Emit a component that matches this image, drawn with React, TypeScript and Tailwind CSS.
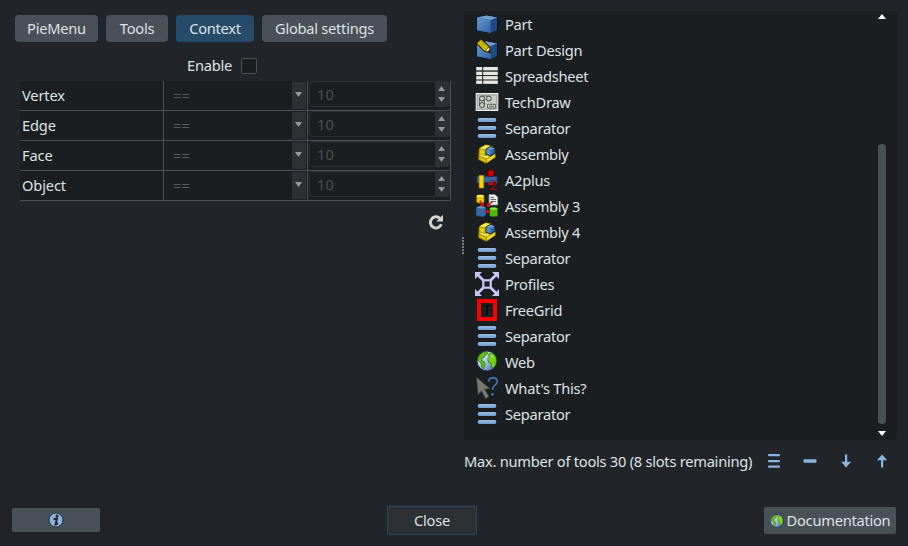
import React from "react";

const Svg = ({ children }: { children: React.ReactNode }) => (
  <svg viewBox="0 0 24 24" className="h-6 w-6 shrink-0 overflow-visible">{children}</svg>
);

const Cube = () => (
  <>
    <path d="M1.5 5.3 11.5 3l11 2v13l-7 3.4-14-2.6z" fill="#3465a4" stroke="#0b1521" strokeWidth="1" strokeLinejoin="round" />
    <path d="M2 5.5 11.5 3.5l10.5 2-6.5 2.6z" fill="#729fcf" />
    <path d="M2 5.8 15.3 8.3v12.4L2 18.3z" fill="url(#cubeFace)" />
    <path d="M15.7 8.3 22 5.8v12l-6.3 3z" fill="#204a87" />
  </>
);

const PartIcon = () => <Svg><Cube /></Svg>;

const PartDesignIcon = () => (
  <Svg>
    <Cube />
    <path d="M1.6 5.2 6 1l8.5 7.8 1 6-6.2-1.6z" fill="#edd400" stroke="#302b00" strokeWidth="1.1" />
    <path d="m3.4 3.8 8 8M5 2.4l8.2 7.7" stroke="#6f6200" strokeWidth=".8" />
    <path d="m9.8 12.6 4.3-3.6 1.2 5.4z" fill="#f3e6b0" stroke="#302b00" strokeWidth=".6" />
    <path d="m12.6 13.4 2.1-1.7.9 3z" fill="#111" />
  </Svg>
);

const SpreadsheetIcon = () => (
  <Svg>
    {[3, 7.7, 12.1, 16.5].map((y) => (
      <g key={y} fill="#e6e6e2">
        <rect x="1.2" y={y} width="6" height="3.4" />
        <rect x="8.2" y={y} width="14.6" height="3.4" />
      </g>
    ))}
  </Svg>
);

const TechDrawIcon = () => (
  <Svg>
    <rect x="1.2" y="3.5" width="21.6" height="17" fill="#c9ccc5" stroke="#eeeeec" />
    <rect x="2.6" y="5" width="18.8" height="14" fill="none" stroke="#888a85" strokeWidth=".6" />
    <g fill="none" stroke="#3a3d3b" strokeWidth=".9">
      <circle cx="7" cy="8.5" r="2.5" />
      <circle cx="7" cy="15" r="2.5" />
      <path d="M4.5 8.5V15M9.5 8.5V15" strokeWidth=".6" />
      <circle cx="13.8" cy="8.5" r="2.5" />
      <path d="M7 6h6.8" strokeWidth=".5" />
      <path d="M12.5 14.3h8v3.8h-8zM14 16.2h5" strokeWidth=".7" />
    </g>
  </Svg>
);

const SeparatorIcon = () => (
  <Svg>
    {[2, 10, 18].map((y) => (
      <g key={y}>
        <rect x="2" y={y - 0.3} width="20" height="4.6" rx="2.3" fill="#10161e" />
        <rect x="2.6" y={y} width="18.8" height="4" rx="2" fill="url(#bar)" />
      </g>
    ))}
  </Svg>
);

const AssemblyIcon = () => (
  <Svg>
    <path d="M3.6 7.5 5 5.5 10.5 2.6l6.6 1.2 3.4 6v5.5l-9.4 6.4-7.9-4v-4z" fill="#edd400" stroke="#302b00" strokeWidth=".9" strokeLinejoin="round" />
    <path d="M4.8 6.2 10.6 3l5.600 1.1-5.600 3.300z" fill="#fce94f" />
    <path d="m4.300 6.800 5.800 1.200v6.400l-5.800-2.400z" fill="#e6cc12" stroke="#645600" strokeWidth=".5" />
    <path d="m3.900 14 7.200 3.400v3.700l-7.200-3.700z" fill="#e0c50c" stroke="#645600" strokeWidth=".5" />
    <path d="m11.500 17.300 8.800-5.700v3.600l-8.800 6z" fill="#f5dd32" stroke="#645600" strokeWidth=".5" />
    <path d="m4 13.600 7.200 3.300 8.600-5.500-3.300-1.200-5.800 3.600-5.400-1.700z" fill="#fce94f" stroke="#645600" strokeWidth=".4" />
    <path d="m11 7 4.400-2.600 4.700 1.300v5.500l-4.400 2.700-4.700-1.500z" fill="#3465a4" stroke="#0b1521" strokeWidth=".9" />
    <path d="m11.500 7 4-2.100 4.100 1.100-3.900 2.100z" fill="#729fcf" />
    <path d="m11.500 7.500 3.800 1v4.600l-3.800-1.200z" fill="#5d8fc8" />
  </Svg>
);

const A2plusIcon = () => (
  <Svg>
    <path d="M2 8.5h20v6H2z" fill="#3465a4" stroke="#183e70" />
    <path d="M13 2.2h5.6v6H13z" fill="#e00000" stroke="#790000" />
    <path d="M13 14.5h5.6V17H13z" fill="#c90000" />
    <path d="M4.2 7.5h4.4V20H4.2z" fill="#f4d500" stroke="#c39b00" strokeWidth=".7" />
    <text x="14.500" y="21.800" fontFamily="Noto Sans" fontSize="14" fill="#9e0912">2</text>
  </Svg>
);

const Assembly3Icon = () => (
  <Svg>
    <path d="M1.5 2c0-1.6 7.6-1.6 7.6 0v6c0 1.6-7.6 1.6-7.6 0z" fill="#e8ca00" stroke="#705d00" strokeWidth=".6" />
    <ellipse cx="5.3" cy="2" rx="3.5" ry="1" fill="#fff170" />
    <path d="M14 .5h6l2.8 2.8V11H14z" fill="#eeeeec" stroke="#888a85" strokeWidth=".7" />
    <path d="M15.5 3.5h3.5M15.5 5.5h5.5M15.5 7.5h5.5" stroke="#555753" strokeWidth=".9" />
    <path d="m1 13.5 4-1.7 6 1.2v8l-3 2-7-1.3z" fill="#3465a4" stroke="#12345f" strokeWidth=".6" />
    <path d="m1.5 13.7 4-1.4 5 .9-3 1.4z" fill="#729fcf" />
    <path d="M14.5 14.7c0-2 8.3-2 8.3 0v6.6c0 2-8.3 2-8.3 0z" fill="#4fb80d" stroke="#174900" strokeWidth=".6" />
    <ellipse cx="18.6" cy="14.7" rx="3.8" ry="1.2" fill="#8ae234" />
    <path d="m5 6.5 2 4.5M17.5 7.500l-4 3.500M9.500 17.500h3" stroke="#dc0e12" strokeWidth="1.600" />
    <path d="m4.600 11 4.200-2v4zM11.700 9v4h4zM12 15.200l3.600 2.300-3.600 2.100z" fill="#dc0e12" />
  </Svg>
);

const ProfilesIcon = () => (
  <Svg>
    <g fill="#c9c5f5">
      <path d="M0 0h7L0 7zM24 0h-7l7 7zM0 24h7l-7-7zM24 24h-7l7-7z" />
      <path d="m2.5 2.5 19 19M21.5 2.5l-19 19" stroke="#c9c5f5" strokeWidth="2.6" />
    </g>
    <rect x="8.3" y="8.3" width="7.4" height="7.4" fill="#1b1e22" stroke="#c9c5f5" strokeWidth="2.2" />
  </Svg>
);

const FreeGridIcon = () => (
  <Svg>
    <rect x="4" y="3" width="16" height="18" fill="#1b1e22" stroke="#f80000" strokeWidth="4" />
    <path d="M8 7.5h8M12 7.5V17" stroke="#050607" strokeWidth="1.2" />
  </Svg>
);

const Globe = () => (
  <>
    <circle cx="12" cy="12" r="10" fill="url(#sea)" stroke="#132744" strokeWidth=".9" />
    <path d="M2.8 9.5C4 5.5 7.5 2.8 11.3 2.5l1.7 1.8-2.3 1.5L9 8.500l-2.500 1 .3 2 2.700 1.500.5 2.500-1.500 4.500-1.800-1.800-.7-4.200L3.500 12z" fill="#66bd12" stroke="#245c00" strokeWidth=".6" />
    <path d="M13.300 5.500 16.500 3.500c2.800 1.300 4.700 4 5 7.500l-.8 4.800-2 3-2.200-.8-.5-4-2.500-.8-.8-3.500 1.800-2z" fill="#73d216" stroke="#245c00" strokeWidth=".6" />
    <path d="m15.500 6.500 3 .8-1.500 1.500z" fill="#d8ecc8" />
  </>
);

const WebIcon = () => <Svg><g transform="translate(0 -1)"><Globe /></g></Svg>;

const WhatsThisIcon = () => (
  <Svg>
    <path d="m1.5 1.5 13.2 11-5.1.8 4.4 7.5-3.5 1.8-4-7.800-3.300 3.800z" fill="#777a75" stroke="#454743" strokeWidth=".7" />
    <path d="M13.500 5.500c.8-5 8.700-4.700 8.700.3 0 3.700-4.700 3.200-4.700 8" fill="none" stroke="#3d72b4" strokeWidth="1.700" />
    <circle cx="17.500" cy="18.300" r="1.400" fill="#3d72b4" />
  </Svg>
);

const tools: [string, () => React.JSX.Element][] = [
  ["Part", PartIcon],
  ["Part Design", PartDesignIcon],
  ["Spreadsheet", SpreadsheetIcon],
  ["TechDraw", TechDrawIcon],
  ["Separator", SeparatorIcon],
  ["Assembly", AssemblyIcon],
  ["A2plus", A2plusIcon],
  ["Assembly 3", Assembly3Icon],
  ["Assembly 4", AssemblyIcon],
  ["Separator", SeparatorIcon],
  ["Profiles", ProfilesIcon],
  ["FreeGrid", FreeGridIcon],
  ["Separator", SeparatorIcon],
  ["Web", WebIcon],
  ["What's This?", WhatsThisIcon],
  ["Separator", SeparatorIcon],
];

const Triangle = ({ up = false, className }: { up?: boolean; className: string }) => (
  <svg viewBox="0 0 8 5" className={className} fill="currentColor" preserveAspectRatio="none">
    <path d={up ? "M0 5 4 0l4 5z" : "M0 0h8L4 5z"} />
  </svg>
);

const Gradients = () => (
  <svg className="absolute h-0 w-0">
    <defs>
      <linearGradient id="cubeFace" x1="0" y1="0" x2="1" y2="1">
        <stop stopColor="#6597d0" />
        <stop offset="1" stopColor="#3465a4" />
      </linearGradient>
      <linearGradient id="bar" x1="0" y1="0" x2="0" y2="1">
        <stop stopColor="#9dbfe6" />
        <stop offset="1" stopColor="#7099cb" />
      </linearGradient>
      <linearGradient id="sea" x1="0" y1="0" x2="1" y2="1">
        <stop stopColor="#eef5ff" />
        <stop offset=".5" stopColor="#a5c4ec" />
        <stop offset="1" stopColor="#3b5c98" />
      </linearGradient>
    </defs>
  </svg>
);

const ConditionRow = ({ label }: { label: string }) => (
  <div className="flex h-[30px] border-b border-[#495057] bg-[#1a1e21]">
    <div className="w-[143px] pl-[2px] leading-[29px] tracking-[-0.15px]">{label}</div>
    <div className="flex w-[144px] justify-between border-l border-[#495057] pr-px">
      <span className="pl-[9px] leading-[28px] tracking-normal text-[#555b61]">==</span>
      <span className="mt-px flex h-[27px] w-[14px] items-center justify-center bg-[#2b3035] pb-[2px] pr-px">
        <Triangle className="h-[5px] w-[7px] text-[#969a9e]" />
      </span>
    </div>
    <div className="flex w-[144px] border-x border-[#495057] pl-px">
      <div className="flex h-[26px] w-full justify-between rounded border border-[#2b3035]">
        <span className="pl-[7px] leading-[25px] tracking-normal text-[#495057]">10</span>
        <span className="flex w-[14px] flex-col items-center justify-center gap-[6px] bg-[#2b3035] pr-px">
          <Triangle up className="h-[5px] w-[7px] text-[#969a9e]" />
          <Triangle className="h-[5px] w-[7px] text-[#969a9e]" />
        </span>
      </div>
    </div>
  </div>
);

export default function App() {
  return (
    <div className="flex h-[546px] w-[908px] flex-col overflow-hidden bg-[#212529] font-['Noto_Sans',sans-serif] text-[14.67px] tracking-[-0.26px] text-[#dee2e6]">
      <Gradients />
      <main className="flex h-[476px]">
        <section className="w-[460px]">
          <nav className="flex gap-2 pl-[15px] pt-[15px] text-center leading-[27px]">
            <div className="h-[27px] w-[83px] rounded bg-[#495057]">PieMenu</div>
            <div className="h-[27px] w-[62px] rounded bg-[#495057]">Tools</div>
            <div className="h-[27px] w-[78px] rounded bg-[#264b69]">Context</div>
            <div className="h-[27px] w-[125px] rounded bg-[#495057]">Global settings</div>
          </nav>
          <label className="mt-4 flex h-4 items-center gap-[9px] pl-[187px]">
            <span className="w-[45px] pb-[2px]">Enable</span>
            <span className="h-4 w-4 rounded-[2px] border border-[#495057] bg-[#1a1e21]" />
          </label>
          <div className="ml-5 mt-[7px] w-[431px]">
            {["Vertex", "Edge", "Face", "Object"].map((label) => (
              <ConditionRow key={label} label={label} />
            ))}
          </div>
          <svg viewBox="0 0 16 16" className="ml-[428px] mt-[13px] h-4 w-4">
            <path d="M13.3 10.3A5.6 5.6 0 1 1 12 4.4" fill="none" stroke="#d3d2d0" strokeWidth="2.9" />
            <path d="M15 .8v6.8H8.2z" fill="#d3d2d0" />
          </svg>
        </section>

        <div className="flex w-1 flex-col items-end gap-px pt-[237px]">
          {[0, 1, 2, 3, 4, 5].map((i) => (
            <span key={i} className="h-[2px] w-[2px] bg-[#777b7f]" />
          ))}
        </div>

        <section className="flex w-[433px] flex-col pt-[11px]">
          <div className="flex h-[429px] justify-between rounded-[3px] bg-[#1a1e21]">
            <ul>
              {tools.map(([name, Icon], i) => (
                <li key={i} className="flex h-[26px] items-center gap-[6px] pl-[11px]">
                  <Icon />
                  <span>{name}</span>
                </li>
              ))}
            </ul>
            <div className="mr-[11px] flex w-2 flex-col items-center pt-[3px]">
              <Triangle up className="h-[5px] w-2 text-white" />
              <div className="mt-[125px] h-[280px] w-2 rounded bg-[#495057]" />
              <Triangle className="mt-[7px] h-[5px] w-2 text-white" />
            </div>
          </div>
          <div className="flex h-9 items-center pt-[5px]">
            <span className="w-[300px] whitespace-nowrap">Max. number of tools 30 (8 slots remaining)</span>
            <div className="flex gap-5 pl-[2px] text-[#8db3df]">
              <svg viewBox="0 0 16 16" className="h-4 w-4" fill="currentColor">
                <rect x="2" y="1" width="12" height="2.2" rx="1" />
                <rect x="2" y="7" width="12" height="2.2" rx="1" />
                <rect x="2" y="12.6" width="12" height="2.2" rx="1" />
              </svg>
              <svg viewBox="0 0 16 16" className="h-4 w-4" fill="currentColor">
                <rect x="1.5" y="6.3" width="13" height="3.4" rx=".6" />
              </svg>
              <svg viewBox="0 0 16 16" className="h-4 w-4" fill="currentColor">
                <path d="M7 1.5h2.2v7.3h4L8.1 14.5 3 8.8h4z" />
              </svg>
              <svg viewBox="0 0 16 16" className="h-4 w-4" fill="currentColor">
                <path d="M7 14.5h2.2V7.2h4L8.1 1.5 3 7.2h4z" />
              </svg>
            </div>
          </div>
        </section>
      </main>

      <footer className="flex h-[70px] items-start px-3 pt-[30px]">
        <div className="mt-[2px] flex h-6 w-[88px] items-center justify-center rounded-[2px] bg-[#495057]">
          <svg viewBox="0 0 16 16" className="h-4 w-4">
            <circle cx="8" cy="8" r="7" fill="#8db3df" stroke="#23303f" />
            <circle cx="9" cy="4" r="1.5" fill="#222529" />
            <path d="M5.5 7.2 9 6.6 7.6 12.2l2.400-.7" fill="none" stroke="#222529" strokeWidth="2" />
          </svg>
        </div>
        <div className="ml-[287px] h-[29px] w-[90px] rounded-[2px] border border-[#264b69] bg-[#2b3035] text-center leading-[27px]">Close</div>
        <div className="ml-auto mt-px flex h-[27px] w-[132px] items-center justify-center gap-[3px] rounded-[2px] bg-[#495057]">
          <svg viewBox="1 1 22 22" className="h-[14px] w-[14px] shrink-0"><Globe /></svg>
          <span className="pb-px">Documentation</span>
        </div>
      </footer>
    </div>
  );
}
